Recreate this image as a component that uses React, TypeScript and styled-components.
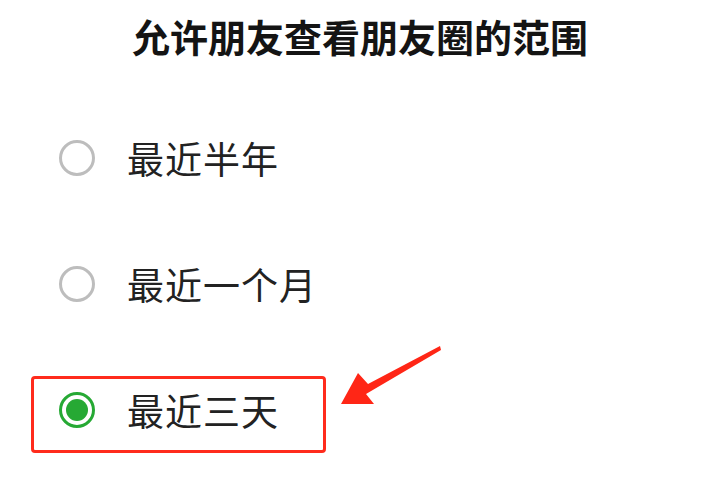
import React, { useState } from 'react';
import styled, { createGlobalStyle } from 'styled-components';

const GlobalStyle = createGlobalStyle`
	html, body {
		margin: 0;
		padding: 0;
		background: #ffffff;
	}
	body {
		font-family: "Noto Sans CJK SC", "Noto Sans", sans-serif;
	}
`;

const Page = styled.div`
	position: relative;
	width: 720px;
	height: 500px;
	overflow: hidden;
	background: #ffffff;
`;

const Title = styled.h1`
	margin: 0;
	height: 95px;
	padding-top: 11px;
	box-sizing: border-box;
	text-align: center;
	font-size: 38px;
	line-height: 50px;
	font-weight: 700;
	color: #141414;
	letter-spacing: 0;
`;

const List = styled.div`
	display: flex;
	flex-direction: column;
`;

const Row = styled.div`
	height: 126px;
	display: flex;
	align-items: center;
	padding-left: 31px;
`;

const Option = styled.label<{ $highlighted: boolean }>`
	display: inline-flex;
	align-items: center;
	gap: 32px;
	height: 77px;
	box-sizing: border-box;
	margin-top: ${(p) => (p.$highlighted ? '8px' : '0')};
	padding: 0 44px 0 25px;
	border: 3px solid ${(p) => (p.$highlighted ? '#ff2b1c' : 'transparent')};
	border-radius: 4px;
	cursor: pointer;
`;

const Radio = styled.span<{ $checked: boolean }>`
	width: 36px;
	height: 36px;
	box-sizing: border-box;
	border-radius: 50%;
	border: 3px solid ${(p) => (p.$checked ? '#26a934' : '#bdbdbd')};
	display: flex;
	align-items: center;
	justify-content: center;
	flex-shrink: 0;
	margin-top: ${(p) => (p.$checked ? '-8px' : '0')};

	&::after {
		content: '';
		display: ${(p) => (p.$checked ? 'block' : 'none')};
		width: 22px;
		height: 22px;
		border-radius: 50%;
		background: #26a934;
	}
`;

const OptionText = styled.span<{ $highlighted: boolean }>`
	font-size: 37px;
	line-height: 44px;
	color: #222222;
	letter-spacing: 1px;
	margin-top: ${(p) => (p.$highlighted ? '-8px' : '0')};
`;

const Arrow = styled.svg`
	position: absolute;
	left: 336px;
	top: 342px;
`;

const options: string[] = ['最近半年', '最近一个月', '最近三天'];

const App = () => {
	const [selected, setSelected] = useState<number>(2);

	return (
		<Page>
			<GlobalStyle />
			<Title>允许朋友查看朋友圈的范围</Title>
			<List>
				{options.map((label, index) => (
					<Row key={label}>
						<Option $highlighted={index === 2} onClick={() => setSelected(index)}>
							<Radio $checked={index === selected} />
							<OptionText $highlighted={index === 2}>{label}</OptionText>
						</Option>
					</Row>
				))}
			</List>
			{/* annotation arrow pointing at the highlighted option */}
			<Arrow width="110" height="70" viewBox="336 342 110 70">
				<polygon
					points="440,346 368,384 358,373 341,404 374,404 366,394 441,350"
					fill="#ff2616"
				/>
			</Arrow>
		</Page>
	);
};

export default App;
